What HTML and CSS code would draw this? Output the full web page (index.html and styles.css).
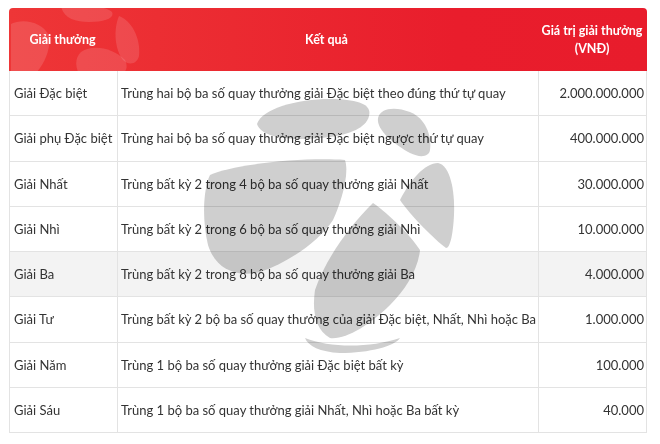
FILE: index.html
```html
<!DOCTYPE html>
<html lang="vi">
<head>
<meta charset="utf-8">
<title>Cơ cấu giải thưởng</title>
<link rel="stylesheet" href="styles.css">
</head>
<body>
<div class="wrap">
  <div class="head">
    <svg class="head-deco" viewBox="0 0 638 63" width="638" height="63" aria-hidden="true">
      <g fill="#ffffff" fill-opacity="0.13">
        <path d="M52,-2 C70,-4 95,-3 103,4 C106,10 96,14 80,14 C66,14 54,10 52,-2 Z"/>
        <path d="M110,8 C122,12 132,30 130,48 C128,56 120,58 114,52 C106,42 104,22 110,8 Z"/>
        <path d="M72,44 C84,36 104,40 116,52 C120,60 116,66 110,66 L70,66 C66,58 66,50 72,44 Z"/>
        <path d="M2,16 C14,10 34,14 40,28 C42,40 36,56 26,66 L2,66 Z"/>
      </g>
    </svg>
    <div class="hc">Giải thưởng</div>
    <div class="hc">Kết quả</div>
    <div class="hc">Giá trị giải thưởng<br>(VNĐ)</div>
  </div>
  <div class="row"><div class="c name">Giải Đặc biệt</div><div class="c desc">Trùng hai bộ ba số quay thưởng giải Đặc biệt theo đúng thứ tự quay</div><div class="c val">2.000.000.000</div></div>
  <div class="row"><div class="c name">Giải phụ Đặc biệt</div><div class="c desc">Trùng hai bộ ba số quay thưởng giải Đặc biệt ngược thứ tự quay</div><div class="c val">400.000.000</div></div>
  <div class="row"><div class="c name">Giải Nhất</div><div class="c desc">Trùng bất kỳ 2 trong 4 bộ ba số quay thưởng giải Nhất</div><div class="c val">30.000.000</div></div>
  <div class="row"><div class="c name">Giải Nhì</div><div class="c desc">Trùng bất kỳ 2 trong 6 bộ ba số quay thưởng giải Nhì</div><div class="c val">10.000.000</div></div>
  <div class="row alt"><div class="c name">Giải Ba</div><div class="c desc">Trùng bất kỳ 2 trong 8 bộ ba số quay thưởng giải Ba</div><div class="c val">4.000.000</div></div>
  <div class="row"><div class="c name">Giải Tư</div><div class="c desc">Trùng bất kỳ 2 bộ ba số quay thưởng của giải Đặc biệt, Nhất, Nhì hoặc Ba</div><div class="c val">1.000.000</div></div>
  <div class="row"><div class="c name">Giải Năm</div><div class="c desc">Trùng 1 bộ ba số quay thưởng giải Đặc biệt bất kỳ</div><div class="c val">100.000</div></div>
  <div class="row"><div class="c name">Giải Sáu</div><div class="c desc">Trùng 1 bộ ba số quay thưởng giải Nhất, Nhì hoặc Ba bất kỳ</div><div class="c val">40.000</div></div>

  <svg class="watermark" viewBox="0 0 660 444" width="660" height="444" aria-hidden="true">
    <g fill="#cfcfcf">
      <path d="M257,124 C262,108 300,98 335,99 C358,100 372,104 369,116 C366,128 350,134 330,137 C300,141 262,140 257,124 Z"/>
      <path d="M378,118 C380,108 395,106 410,112 C425,118 432,135 430,150 C429,157 420,158 410,153 C395,145 376,130 378,118 Z"/>
      <path d="M400,200 C410,180 425,163 438,163 C450,165 455,190 454,215 C453,235 450,248 446,248 C435,240 410,215 400,200 Z"/>
      <path d="M210,175 C230,165 300,157 345,160 C350,175 340,205 333,220 C320,240 290,262 260,272 C235,278 215,268 208,245 C202,220 203,190 210,175 Z"/>
      <path d="M373,203 C390,215 410,235 420,250 C418,270 405,290 390,305 C370,325 345,340 330,338 C315,330 312,310 315,290 C325,260 350,225 373,203 Z"/>
      <path d="M305,338 C330,348 370,348 400,338 C395,346 370,353 340,353 C320,352 308,346 305,338 Z"/>
    </g>
  </svg>
</div>
</body>
</html>
```

FILE: styles.css
```css
* { box-sizing: border-box; }

html, body {
  margin: 0;
  padding: 0;
  background: #ffffff;
}

body {
  font-family: "Lato", "Open Sans", "Liberation Sans", sans-serif;
  color: #333333;
}

.wrap {
  position: relative;
  width: 638px;
  margin: 8px 0 0 9px;
}

.head {
  position: relative;
  display: grid;
  grid-template-columns: 107px 421px 110px;
  height: 63px;
  border-radius: 4px 4px 0 0;
  overflow: hidden;
  background: linear-gradient(90deg, #ee3637 0%, #eb2a31 35%, #e91d2c 70%, #e81c2c 100%);
  color: #ffffff;
  font-weight: 700;
  font-size: 12.5px;
}

.head-deco {
  position: absolute;
  left: 0;
  top: 0;
}

.hc {
  position: relative;
  display: flex;
  align-items: center;
  justify-content: center;
  text-align: center;
  line-height: 18px;
}

.row {
  display: grid;
  grid-template-columns: 107px 421px 110px;
  height: 45.25px;
  border-left: 1px solid #e3e3e3;
  border-right: 1px solid #e3e3e3;
  border-bottom: 1px solid #e3e3e3;
  font-size: 13px;
}

.row.alt {
  background: #f3f3f3;
}

.c {
  display: flex;
  align-items: center;
  white-space: nowrap;
}

.name {
  padding-left: 4px;
}

.desc {
  border-left: 1px solid #e3e3e3;
  padding-left: 3px;
}

.val {
  border-left: 1px solid #e3e3e3;
  justify-content: flex-end;
  padding-right: 4px;
}

.watermark {
  position: absolute;
  left: -9px;
  top: -8px;
  pointer-events: none;
  mix-blend-mode: multiply;
}
```
